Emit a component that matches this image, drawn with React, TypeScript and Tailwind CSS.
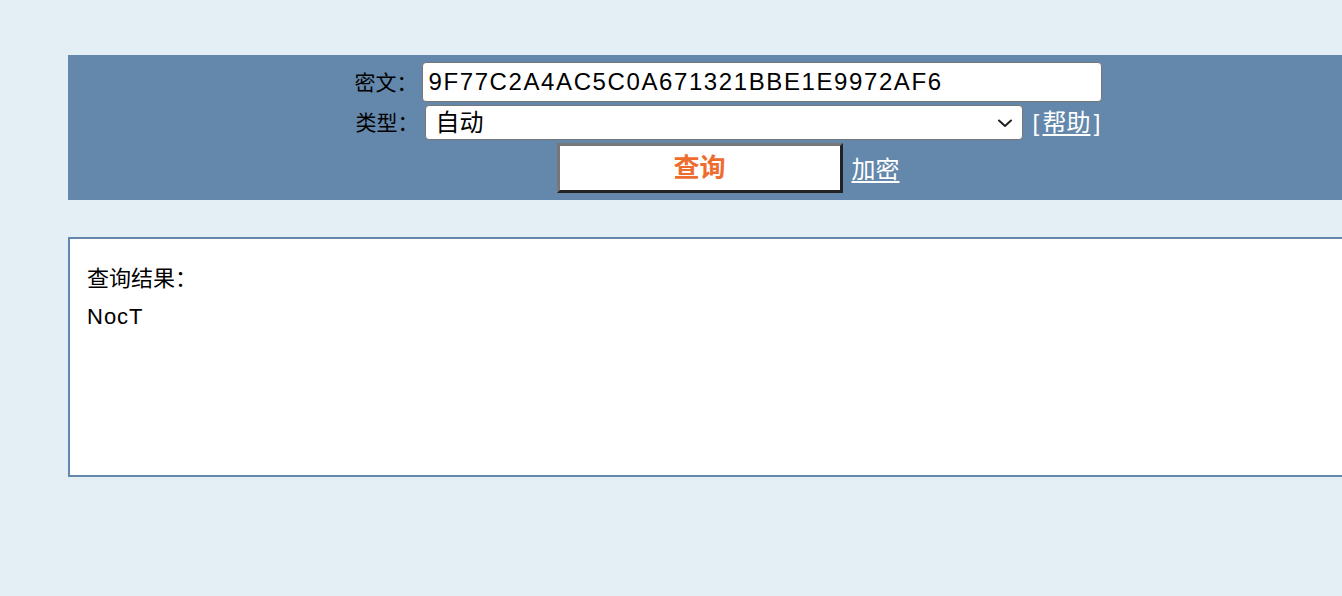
import React from "react";

export default function App() {
  const cjk = { fontFamily: '"Liberation Sans", "Noto Sans CJK SC", sans-serif' };
  return (
    <div className="min-h-[596px] w-full bg-[#e4eef5] pt-[55px] pb-[119px] overflow-hidden" style={cjk}>
      <div className="ml-[68px] w-[1320px] h-[145px] bg-[#6487ac] pt-[7px] flex flex-col gap-[3px]">
        <div className="h-[40px] flex justify-center items-center gap-[4px]">
          <span className="shrink-0 whitespace-nowrap text-[21px] leading-none text-black w-[63px]">密文：</span>
          <div className="shrink-0 w-[680px] h-[40px] bg-white border border-[#767676] rounded-[4px] flex items-center pl-[6px] text-[24px] leading-none tracking-[1.6px] text-black">
            9F77C2A4AC5C0A671321BBE1E9972AF6
          </div>
        </div>
        <div className="h-[35px] flex justify-center items-center">
          <span className="shrink-0 whitespace-nowrap text-[21px] leading-none text-black w-[63px] mr-[6px]">类型：</span>
          <div className="shrink-0 w-[598px] h-[35px] bg-white border border-[#767676] rounded-[4px] flex items-center justify-between pl-[10px] pr-[8px] text-[24px] leading-none text-black">
            <span>自动</span>
            <svg width="18" height="18" viewBox="0 0 18 18" fill="none">
              <path d="M3 6.5 L9 12 L15 6.5" stroke="#222" strokeWidth="2" strokeLinecap="round" strokeLinejoin="round" />
            </svg>
          </div>
          <span className="shrink-0 whitespace-nowrap ml-[10px] w-[68px] flex justify-between text-[24px] leading-none text-white">
            <span>[</span>
            <span className="underline underline-offset-[3px]">帮助</span>
            <span>]</span>
          </span>
        </div>
        <div className="h-[50px] flex justify-center items-center gap-[9px]">
          <div className="shrink-0 w-[286px] h-[50px] bg-white border-[3px] border-t-[#777] border-l-[#777] border-b-[#222] border-r-[#222] flex items-center justify-center text-[26px] leading-none font-bold text-[#ef6c2f]">
            查询
          </div>
          <span className="shrink-0 whitespace-nowrap text-[24px] leading-none text-white underline underline-offset-[3px] mt-[4px]">加密</span>
        </div>
      </div>
      <div className="ml-[68px] mt-[37px] w-[1320px] h-[240px] bg-white border-2 border-[#6487ac] pl-[17px] pt-[21px] text-[22px] leading-[38px] text-black">
        <div>查询结果：</div>
        <div className="tracking-[1px]">NocT</div>
      </div>
    </div>
  );
}
